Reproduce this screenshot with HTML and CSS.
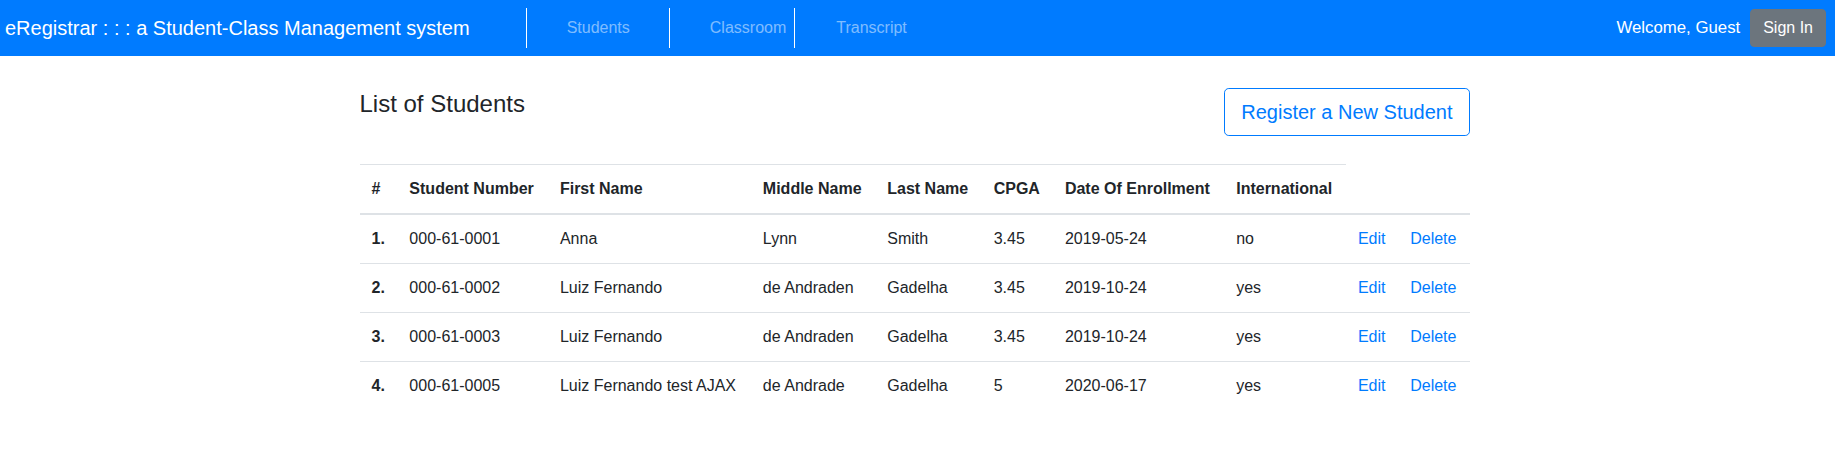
FILE: index.html
```html
<!DOCTYPE html>
<html lang="en">
<head>
<meta charset="utf-8">
<title>eRegistrar - Students</title>
<link rel="stylesheet" href="styles.css">
</head>
<body>
<nav class="navbar">
  <a class="brand" href="#">eRegistrar : : : a Student-Class Management system</a>
  <ul class="nav-links">
    <li class="nav-item nav-item-students"><a href="#">Students</a></li>
    <li class="nav-item nav-item-classroom"><a href="#">Classroom</a></li>
    <li class="nav-item nav-item-transcript"><a href="#">Transcript</a></li>
  </ul>
  <div class="nav-right">
    <span class="welcome">Welcome, Guest</span>
    <a class="btn-signin" href="#">Sign In</a>
  </div>
</nav>

<main class="container">
  <div class="page-head">
    <h4 class="page-title">List of Students</h4>
    <a class="btn-outline" href="#">Register a New Student</a>
  </div>

  <table class="table">
    <thead>
      <tr>
        <th>#</th>
        <th>Student Number</th>
        <th>First Name</th>
        <th>Middle Name</th>
        <th>Last Name</th>
        <th>CPGA</th>
        <th>Date Of Enrollment</th>
        <th>International</th>
      </tr>
    </thead>
    <tbody>
      <tr>
        <th class="row-num">1.</th>
        <td>000-61-0001</td>
        <td>Anna</td>
        <td>Lynn</td>
        <td>Smith</td>
        <td>3.45</td>
        <td>2019-05-24</td>
        <td>no</td>
        <td><a href="#">Edit</a></td>
        <td><a href="#">Delete</a></td>
      </tr>
      <tr>
        <th class="row-num">2.</th>
        <td>000-61-0002</td>
        <td>Luiz Fernando</td>
        <td>de Andraden</td>
        <td>Gadelha</td>
        <td>3.45</td>
        <td>2019-10-24</td>
        <td>yes</td>
        <td><a href="#">Edit</a></td>
        <td><a href="#">Delete</a></td>
      </tr>
      <tr>
        <th class="row-num">3.</th>
        <td>000-61-0003</td>
        <td>Luiz Fernando</td>
        <td>de Andraden</td>
        <td>Gadelha</td>
        <td>3.45</td>
        <td>2019-10-24</td>
        <td>yes</td>
        <td><a href="#">Edit</a></td>
        <td><a href="#">Delete</a></td>
      </tr>
      <tr>
        <th class="row-num">4.</th>
        <td>000-61-0005</td>
        <td>Luiz Fernando test AJAX</td>
        <td>de Andrade</td>
        <td>Gadelha</td>
        <td>5</td>
        <td>2020-06-17</td>
        <td>yes</td>
        <td><a href="#">Edit</a></td>
        <td><a href="#">Delete</a></td>
      </tr>
    </tbody>
  </table>
</main>
</body>
</html>
```

FILE: styles.css
```css
* {
  box-sizing: border-box;
}

html, body {
  margin: 0;
  padding: 0;
}

body {
  font-family: "Liberation Sans", Arial, sans-serif;
  font-size: 16px;
  line-height: 1.5;
  color: #212529;
  background: #ffffff;
}

a {
  color: #007bff;
  text-decoration: none;
}

/* Navbar */
.navbar {
  display: flex;
  align-items: center;
  height: 56px;
  background: #007bff;
  padding: 0 9px 0 5px;
}

.brand {
  color: #ffffff;
  font-size: 20px;
  line-height: 30px;
  white-space: nowrap;
}

.nav-links {
  display: flex;
  align-items: stretch;
  list-style: none;
  margin: 0 0 0 56px;
  padding: 0;
  height: 40px;
}

.nav-item {
  display: flex;
  align-items: center;
  border-left: 1px solid #ffffff;
}

.nav-item a {
  color: rgba(255, 255, 255, 0.5);
  line-height: 24px;
}

.nav-item-students a {
  padding: 0 39px 0 40px;
}

.nav-item-classroom a {
  padding: 0 8px 0 40px;
}

.nav-item-transcript {
  border-left: none;
}

.nav-item-transcript a {
  padding: 0 0 0 41px;
  border-left: 1px solid #ffffff;
  display: flex;
  align-items: center;
  height: 100%;
}

.nav-right {
  margin-left: auto;
  display: flex;
  align-items: center;
  gap: 10px;
}

.welcome {
  color: #ffffff;
  font-size: 16.8px;
}

.btn-signin {
  display: inline-block;
  background: #6c757d;
  color: #ffffff;
  border: 1px solid #6c757d;
  border-radius: 4px;
  padding: 6px 12px;
  line-height: 24px;
}

/* Content */
.container {
  width: 1110px;
  margin: 0 0 0 calc(50% - 558px);
  padding: 0;
}

.page-head {
  display: flex;
  justify-content: space-between;
  align-items: flex-start;
  padding-top: 32px;
  margin-bottom: 28px;
}

.page-title {
  margin: 2px 0 0 0;
  font-size: 24px;
  font-weight: 400;
  line-height: 1.2;
}

.btn-outline {
  display: inline-block;
  color: #007bff;
  border: 1px solid #007bff;
  border-radius: 4.8px;
  padding: 8px 16px;
  font-size: 20px;
  line-height: 30px;
}

.table {
  width: 100%;
  border-collapse: collapse;
  color: #212529;
}

.table th,
.table td {
  padding: 12px;
  text-align: left;
  vertical-align: top;
  border-top: 1px solid #dee2e6;
  white-space: nowrap;
}

.table thead th {
  font-weight: 700;
  border-bottom: 2px solid #dee2e6;
  vertical-align: bottom;
}

.table .row-num {
  font-weight: 700;
}

.table tbody tr:first-child th,
.table tbody tr:first-child td {
  border-top: 2px solid #dee2e6;
}
```
